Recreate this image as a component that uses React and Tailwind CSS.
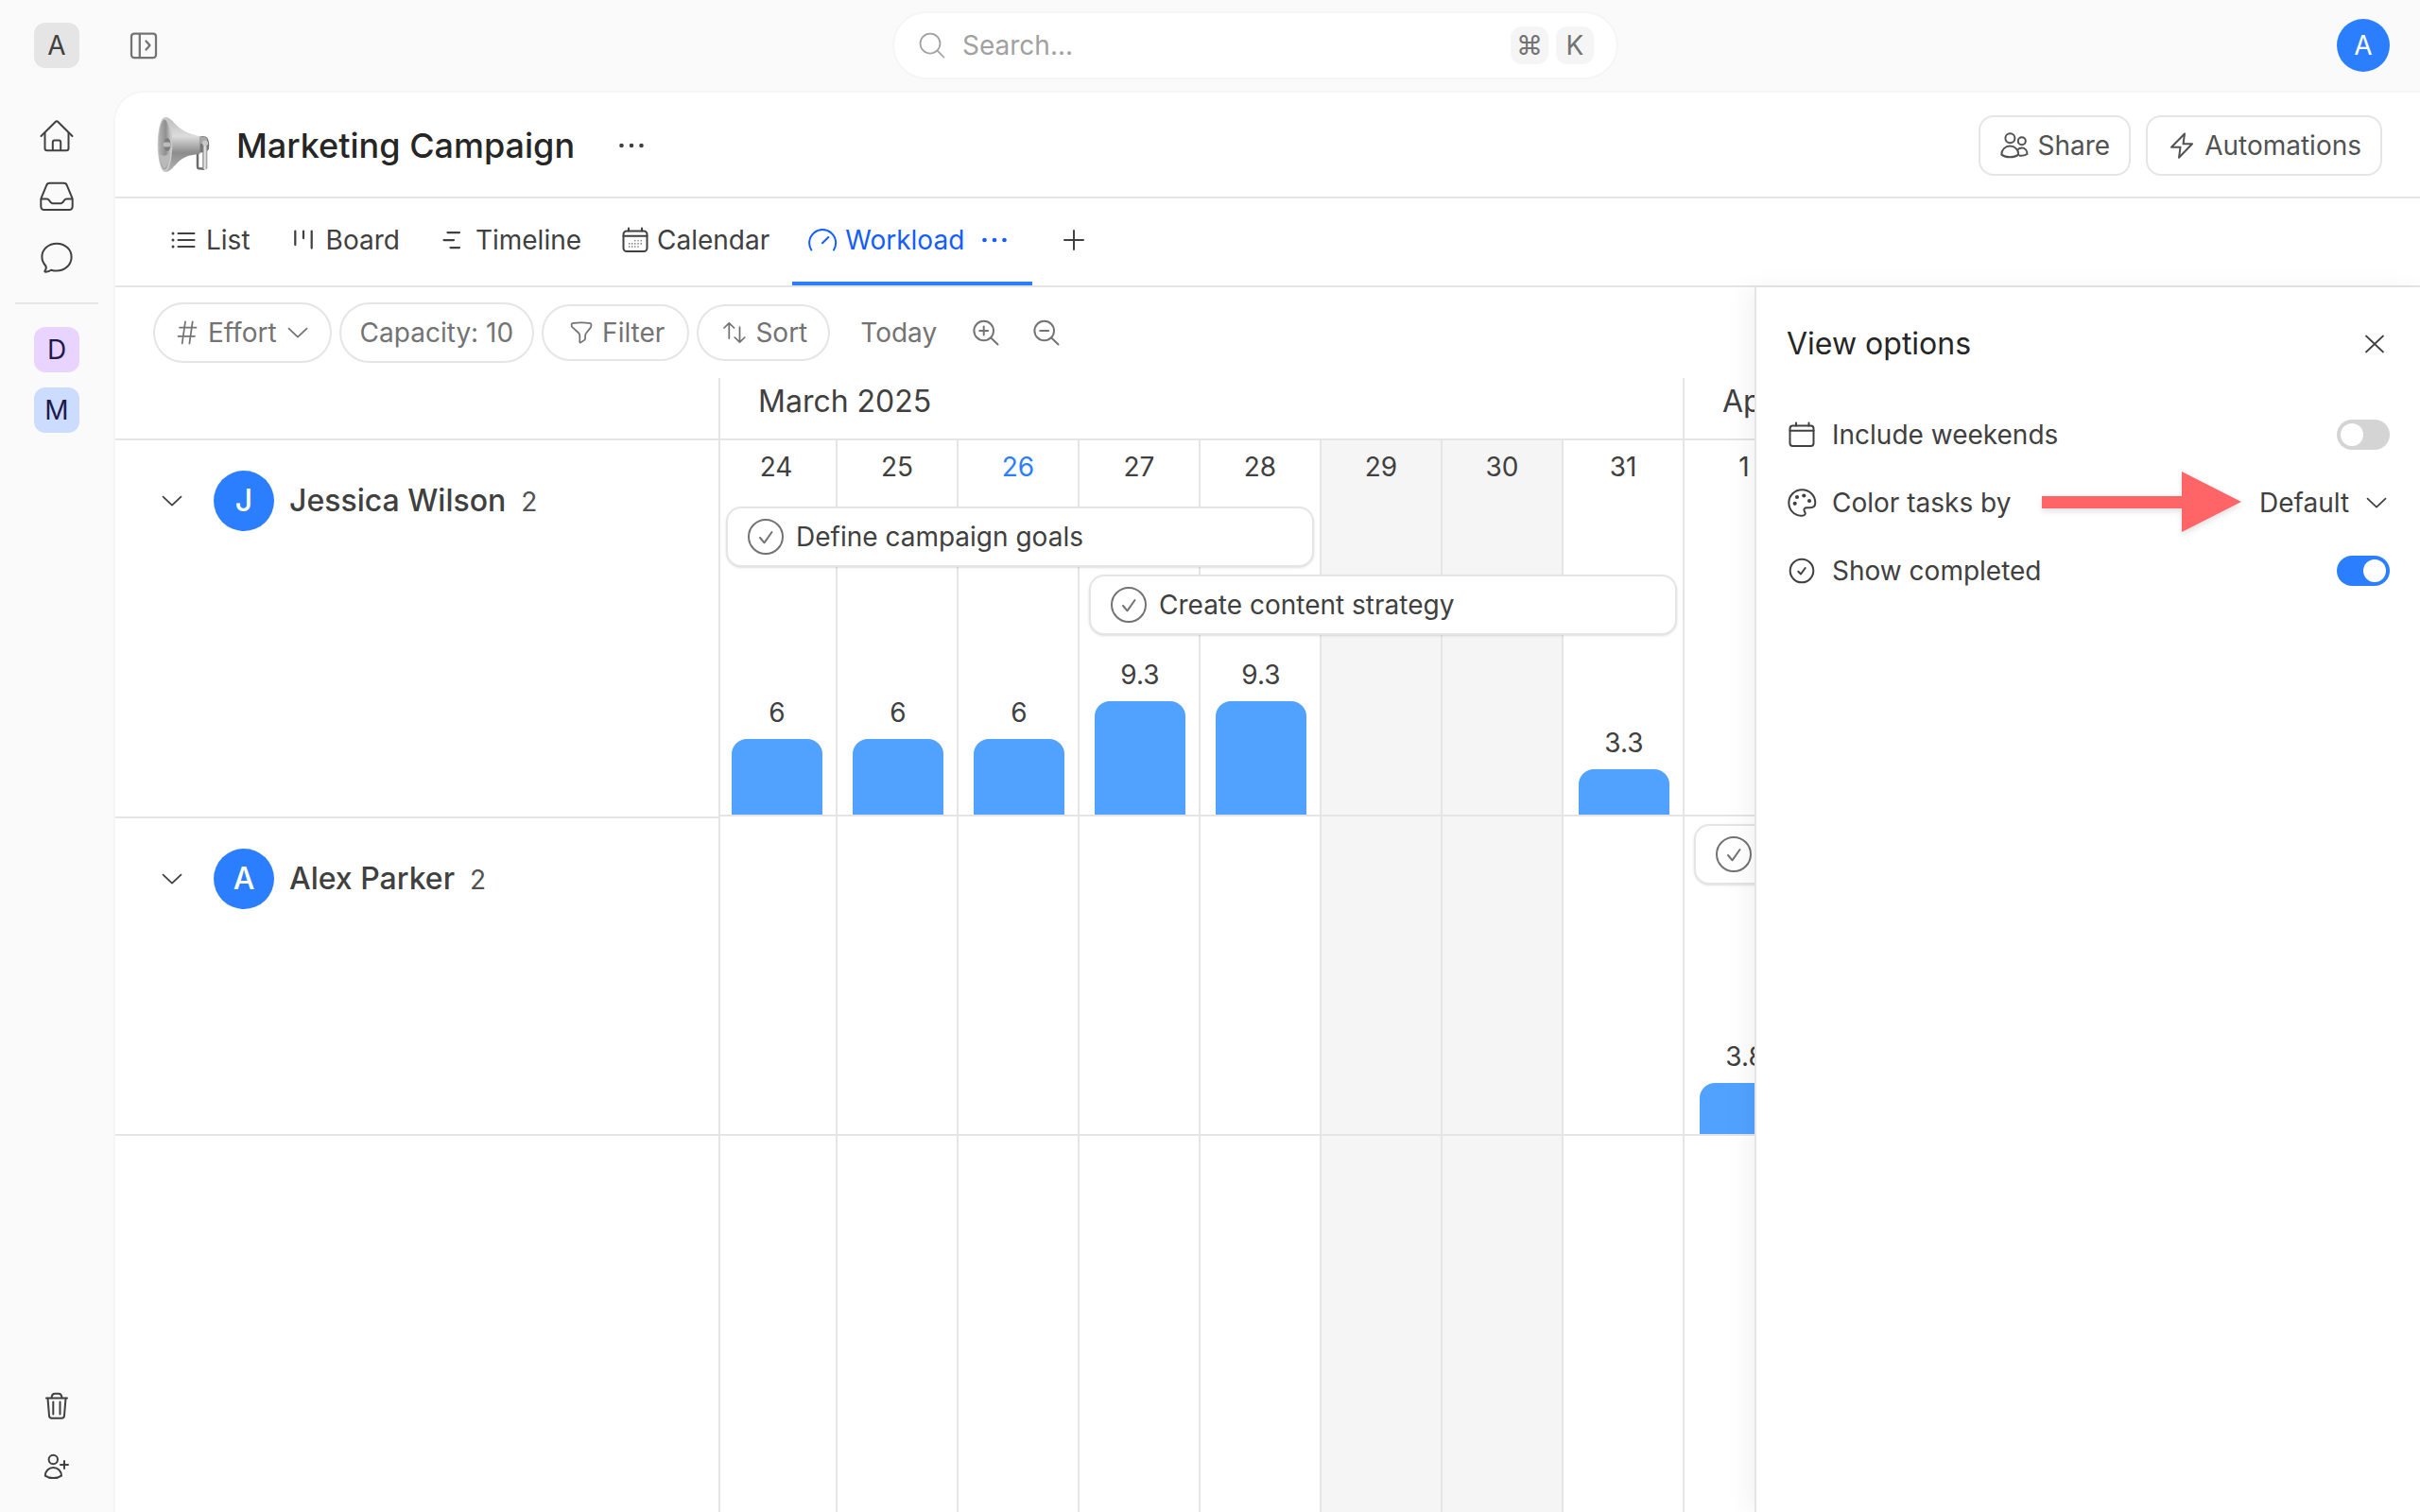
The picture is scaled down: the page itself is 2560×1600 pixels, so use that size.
import React, { useState } from 'react';

const Svg = ({ box = 32, stroke = 2, className = '', children }) => (
  <svg
    width={box}
    height={box}
    viewBox={`0 0 ${box} ${box}`}
    fill="none"
    stroke="currentColor"
    strokeWidth={stroke}
    strokeLinecap="round"
    strokeLinejoin="round"
    aria-hidden="true"
    className={`shrink-0 ${className}`}
  >
    {children}
  </svg>
);

const HomeIcon = () => (
  <Svg box={40}>
    <path d="M3.5 20 18.6 5q1.4-1.4 2.8 0L36.5 20" />
    <path d="M7.5 16.5V33q0 2.3 2.3 2.3h20.4q2.3 0 2.3-2.3V16.5" />
    <path d="M15.8 35V26.500q0-2 2-2h4.400q2 0 2 2V35" />
  </Svg>
);

const InboxIcon = () => (
  <Svg box={40}>
    <path d="M12.500 5.800h15q2.600 0 3.400 2.600l5.300 12.800q.5 1.200.5 2.600v6.400q0 3.800-3.600 3.800H6.900q-3.600 0-3.600-3.800v-6.400q0-1.400.5-2.600L9.100 8.400q.8-2.600 3.400-2.600z" />
    <path d="M3.600 22.500h5.600q2 0 3 1.800t3.300 3h9q2.300-1.200 3.300-3t3-1.800h5.600" />
  </Svg>
);

const ChatIcon = () => (
  <Svg box={40}>
    <path d="M20 5.800c-8.700 0-15.600 6-15.600 14 0 3.600 1.500 6.900 3.900 9.400.9 1.800.4 3.800-.8 5.300-.5.7 0 1.400.9 1.300 2.400-.2 4.300-1 5.700-2.100 1.800.6 3.800.9 5.900.9 8.700 0 15.600-6.500 15.600-14.600S28.700 5.800 20 5.800z" />
  </Svg>
);

const TrashIcon = () => (
  <Svg box={40}>
    <path d="M9 11.500h22" />
    <path d="M14.500 11.300q.4-4.500 3.600-4.500h3.800q3.200 0 3.600 4.500" />
    <path d="M10.500 11.700 12 30.200q.2 2.500 2.600 2.500h10.800q2.400 0 2.600-2.500l1.500-18.500" />
    <path d="M16.300 15.500v13M23.500 15.500v13" />
  </Svg>
);

const InviteIcon = () => (
  <Svg box={40}>
    <circle cx="16.300" cy="12.500" r="4.700" />
    <path d="M7.800 29.600c0-5 3.800-8.600 8.600-8.600s8.600 3.600 8.600 8.600c-2.500 1.800-5.400 2.500-8.600 2.500s-6.100-.7-8.600-2.500z" />
    <path d="M24 18h8M28 14v8" />
  </Svg>
);

const PanelIcon = () => (
  <Svg stroke={2.25}>
    <rect x="3" y="3.500" width="26" height="25.500" rx="3" />
    <path d="M11.800 4v25M18.500 11.500 22.500 16l-4 4.500" />
  </Svg>
);

const SearchIcon = () => (
  <Svg stroke={1.75}>
    <circle cx="14" cy="14" r="10.500" />
    <path d="m21.800 21.800 6.700 6.700" />
  </Svg>
);

const ShareIcon = () => (
  <Svg>
    <circle cx="11.400" cy="8.200" r="5" />
    <circle cx="23.800" cy="11.300" r="4" />
    <path d="M2.300 25.600c0-5.200 3.900-9 9-9s9 3.800 9 9c-2.600 2-5.700 2.700-9 2.700s-6.400-.7-9-2.700z" />
    <path d="M19.300 20.600c1.200-1.400 2.700-2.100 4.500-2.100 3.300 0 5.700 2.700 5.700 6.500-2.400 1.400-5.200 2-8 1.700" />
  </Svg>
);

const BoltIcon = () => (
  <Svg>
    <path d="M19 3.500 5 17.800h9.500L13 28.800 27 14.300h-9.500z" />
  </Svg>
);

const DotsIcon = () => (
  <Svg>
    <g fill="currentColor" stroke="none">
      <circle cx="5.500" cy="16" r="2.300" />
      <circle cx="16" cy="16" r="2.300" />
      <circle cx="26.500" cy="16" r="2.300" />
    </g>
  </Svg>
);

const ListIcon = () => (
  <Svg>
    <path d="M10.500 9h17M10.500 16h17M10.500 23h17" />
    <g fill="currentColor" stroke="none">
      <circle cx="5" cy="9" r="1.500" />
      <circle cx="5" cy="16" r="1.500" />
      <circle cx="5" cy="23" r="1.500" />
    </g>
  </Svg>
);

const BoardIcon = () => (
  <Svg stroke={2.25}>
    <path d="M7.300 6.500V21M16 6.500V14M24.700 6.500v18" />
  </Svg>
);

const TimelineIcon = () => (
  <Svg stroke={2.25}>
    <path d="M10.500 8H23M6.500 16H17M13.500 24H23" />
  </Svg>
);

const CalendarIcon = () => (
  <Svg>
    <rect x="4.500" y="6.500" width="25" height="21.500" rx="3.500" />
    <path d="M4.500 11.800h25M10 3.500v3M24 3.500v3" />
    <path
      strokeWidth="1.600"
      strokeOpacity=".75"
      d="M16.800 16.700h.01M20 16.700h.01M23.200 16.700h.01M10.700 19.900h.01M13.700 19.900h.01M16.800 19.900h.01M20 19.900h.01M23.200 19.900h.01M10.700 23.100h.01M13.700 23.100h.01M16.800 23.100h.01M20 23.100h.01"
    />
  </Svg>
);

const GaugeIcon = () => (
  <Svg>
    <path d="M4.300 26.500A14 14 0 1 1 28 26.500" />
    <path d="m16 19.300 6.300-6.300" />
  </Svg>
);

const PlusIcon = () => (
  <Svg>
    <path d="M16 6v20M6 16h20" />
  </Svg>
);

const HashIcon = () => (
  <Svg stroke={1.75}>
    <path d="M8 10.700h17.500M6.500 19.800H24M14 4.300l-3.300 23.200M21.700 4.300l-3.300 23.200" />
  </Svg>
);

const ChevronIcon = () => (
  <Svg stroke={1.75}>
    <path d="m6.500 11.700 9.500 9 9.500-9" />
  </Svg>
);

const FilterIcon = () => (
  <Svg stroke={1.75}>
    <path d="M5.600 7.200q0-.9 1-1.100 9.400-1.400 18.800 0 1 .2 1 1.100v1.200q0 1.600-1 2.700l-4.300 5.400q-1 1.200-1 2.800v2.600q0 1.300-1 2l-3.600 2.500q-1.200.8-1.200-.6v-6.500q0-1.600-1-2.800l-6.700-6.100q-1-1-1-2.500z" />
  </Svg>
);

const SortIcon = () => (
  <Svg stroke={1.75}>
    <path d="M10.300 6v16M5 11l5.300-5.200 5.300 5.200M21.500 10v16M16.200 21l5.300 5.200 5.300-5.200" />
  </Svg>
);

const ZoomIcon = ({ plus }) => (
  <Svg>
    <circle cx="13.700" cy="14" r="10.300" />
    <path d="m21.500 21.800 7 6.700M9.200 14h9" />
    {plus && <path d="M13.700 9.500v9" />}
  </Svg>
);

const CloseIcon = () => (
  <Svg stroke={1.75}>
    <path d="M7 7.500 25 24.500M25 7.500 7 24.500" />
  </Svg>
);

const WeekendIcon = () => (
  <Svg>
    <rect x="3.500" y="6.500" width="25" height="21.500" rx="3" />
    <path d="M3.500 11.800h25M10 3.500v3M23.500 3.500v3" />
  </Svg>
);

const PaletteIcon = () => (
  <Svg>
    <path d="M15 29.800C7.500 29.300 2.300 23.300 2.300 16a14 13.800 0 0 1 28 0c0 3.700-2.600 5.200-5.600 5.200h-3.400c-2.400 0-3.500 1.600-2.600 3.400l.9 1.900c.8 1.900-1.200 3.500-4.600 3.300z" />
    <g fill="currentColor" stroke="none">
      <circle cx="11" cy="10" r="2.100" />
      <circle cx="18.300" cy="8.500" r="2.100" />
      <circle cx="24" cy="14" r="2.100" />
      <circle cx="8.700" cy="16.800" r="2.100" />
    </g>
  </Svg>
);

const CompletedIcon = () => (
  <Svg>
    <circle cx="16" cy="16" r="12.300" />
    <path d="m12.300 16.800 2.700 2.700 4.700-6.500" />
  </Svg>
);

const TaskCheckIcon = () => (
  <Svg box={40}>
    <circle cx="20" cy="20" r="18" />
    <path d="m14 21 4.500 5.300L26.500 15" />
  </Svg>
);

const Megaphone = () => (
  <svg width="64" height="64" viewBox="0 0 64 64" aria-hidden="true" className="shrink-0">
    <defs>
      <linearGradient id="horn" x1="0" y1="0" x2="0" y2="1">
        <stop offset="0" stopColor="#bdbdbd" />
        <stop offset=".35" stopColor="#dcdcdc" />
        <stop offset=".65" stopColor="#8c8c8c" />
        <stop offset="1" stopColor="#b4b4b4" />
      </linearGradient>
      <linearGradient id="mouth" x1="0" y1="0" x2="1" y2="0">
        <stop offset="0" stopColor="#b5b5b5" />
        <stop offset=".6" stopColor="#8f8f8f" />
        <stop offset="1" stopColor="#c4c4c4" />
      </linearGradient>
      <linearGradient id="handle" x1="0" y1="0" x2="1" y2="0">
        <stop offset="0" stopColor="#7b7b7b" />
        <stop offset=".5" stopColor="#f1f1f1" />
        <stop offset="1" stopColor="#858585" />
      </linearGradient>
    </defs>
    <path d="M47 40v14.500q0 1.500 1.500 1.700l6 .6" fill="none" stroke="#6a6a6a" strokeWidth="2.500" />
    <path d="M49 22.500q6-1.500 8.500 1.500 2.500 5 1.500 11.500-2 4.500-10 4z" fill="#777" />
    <path d="M50 23q5-1 7 1.500l-.5 5-6.500.5z" fill="#a9a9a9" />
    <rect x="52.300" y="32" width="5" height="25.500" rx="2" fill="url(#handle)" />
    <circle cx="55" cy="29.500" r="3" fill="#c9c9c9" />
    <path d="M13 2c5 0 9 6 14 10.500 7 6 14 7.500 22.500 9.700V41c-8.500.8-15 1.500-22 7.500C22 53.500 18 60 13 60z" fill="url(#horn)" />
    <ellipse cx="12.500" cy="31" rx="7.800" ry="29" fill="#c9c9c9" />
    <ellipse cx="12" cy="31" rx="6.300" ry="26.500" fill="url(#mouth)" />
    <path d="M6.500 41q5 4 11.500-1-1 12-6 17-4-4-5.500-16z" fill="#b9b9b9" />
    <ellipse cx="15" cy="31" rx="3.500" ry="7" fill="#7d7d7d" />
    <rect x="10.500" y="28.500" width="8" height="5" rx="2.500" fill="#bcbcbc" />
  </svg>
);

const tabs = [
  { name: 'List', Icon: ListIcon },
  { name: 'Board', Icon: BoardIcon },
  { name: 'Timeline', Icon: TimelineIcon },
  { name: 'Calendar', Icon: CalendarIcon },
];

const days = [
  { label: '24' },
  { label: '25' },
  { label: '26', today: true },
  { label: '27' },
  { label: '28' },
  { label: '29', weekend: true },
  { label: '30', weekend: true },
  { label: '31' },
  { label: '1' },
];

const jessica = {
  tasks: [
    { title: 'Define campaign goals', column: '1 / span 5' },
    { title: 'Create content strategy', column: '4 / span 5' },
  ],
  // label and bar height for each day column
  bars: [
    ['6', 80],
    ['6', 80],
    ['6', 80],
    ['9.3', 120],
    ['9.3', 120],
    null,
    null,
    ['3.3', 48],
    null,
  ],
};

const alex = {
  tasks: [{ column: '9 / span 1' }],
  bars: [null, null, null, null, null, null, null, null, ['3.8', 54]],
};

const Sidebar = () => (
  <aside className="flex w-[120px] shrink-0 flex-col items-center pt-6 pb-4">
    <button className="flex size-12 items-center justify-center rounded-xl bg-neutral-200">A</button>
    <nav className="mt-10 flex w-full flex-col items-center">
      <a href="#home" aria-label="Home" className="flex h-16 items-center"><HomeIcon /></a>
      <a href="#inbox" aria-label="Inbox" className="flex h-16 items-center"><InboxIcon /></a>
      <a href="#chat" aria-label="Chat" className="flex h-16 items-center"><ChatIcon /></a>
      <hr className="my-4 w-[88px] border-t-2 border-neutral-200" />
      <a href="#d" className="my-2 flex size-12 items-center justify-center rounded-xl bg-purple-200 text-[#1e1a4d]">D</a>
      <a href="#m" className="my-2 flex size-12 items-center justify-center rounded-xl bg-[#cbdcff] text-[#1e1a4d]">M</a>
    </nav>
    <div className="mt-auto flex flex-col items-center">
      <button aria-label="Trash" className="flex h-16 items-center"><TrashIcon /></button>
      <button aria-label="Invite" className="flex h-16 items-center"><InviteIcon /></button>
    </div>
  </aside>
);

const TopBar = () => (
  <header className="flex h-24 shrink-0 items-center pr-8 pl-2">
    <div className="flex flex-1">
      <button aria-label="Expand sidebar" className="p-2 text-neutral-500"><PanelIcon /></button>
    </div>
    <label className="flex h-[72px] w-[32%] min-w-[400px] items-center gap-4 rounded-full border-2 border-neutral-100 bg-white px-6 text-neutral-400">
      <SearchIcon />
      <input
        type="search"
        aria-label="Search"
        placeholder="Search..."
        className="min-w-0 flex-1 bg-transparent outline-none placeholder:text-neutral-400"
      />
      <span className="flex gap-2 text-neutral-500">
        <kbd className="flex size-10 items-center justify-center rounded-xl bg-neutral-100 font-[inherit]">⌘</kbd>
        <kbd className="flex size-10 items-center justify-center rounded-xl bg-neutral-100 font-[inherit]">K</kbd>
      </span>
    </label>
    <div className="flex flex-1 justify-end">
      <button className="flex size-14 items-center justify-center rounded-full bg-blue-500 text-white">A</button>
    </div>
  </header>
);

const ProjectHeader = () => (
  <div className="flex h-28 shrink-0 items-center border-b-2 border-neutral-200 px-10 pt-0.5">
    <Megaphone />
    <h1 className="ml-6 text-[36px] font-medium text-neutral-800">Marketing Campaign</h1>
    <button aria-label="Project menu" className="ml-7 px-4"><DotsIcon /></button>
    <div className="ml-auto flex gap-4 text-neutral-600">
      <button className="flex h-16 items-center gap-2 rounded-2xl border-2 border-neutral-200 px-5">
        <ShareIcon />
        Share
      </button>
      <button className="flex h-16 items-center gap-2 rounded-2xl border-2 border-neutral-200 px-5">
        <BoltIcon />
        Automations
      </button>
    </div>
  </div>
);

const ViewTabs = () => (
  <nav className="flex h-[94px] shrink-0 items-stretch gap-2 border-b-2 border-neutral-200 px-10">
    {tabs.map(({ name, Icon }) => (
      <a key={name} href="#view" className="flex items-center gap-2 border-b-4 border-transparent px-4">
        <Icon />
        {name}
      </a>
    ))}
    <div className="flex items-center gap-4 border-b-4 border-blue-500 pr-6 pl-4 text-blue-600">
      <a href="#workload" aria-current="page" className="flex items-center gap-2">
        <GaugeIcon />
        Workload
      </a>
      <button aria-label="Workload view menu"><DotsIcon /></button>
    </div>
    <button aria-label="Add view" className="border-b-4 border-transparent px-5"><PlusIcon /></button>
  </nav>
);

const Toolbar = () => (
  <div className="flex h-24 shrink-0 items-center gap-2 px-10 text-neutral-500">
    <button className="flex h-16 items-center gap-1.5 rounded-full border-2 border-neutral-200 px-[18px]">
      <HashIcon />
      Effort
      <ChevronIcon />
    </button>
    <button className="h-16 rounded-full border-2 border-neutral-200 px-5">Capacity: 10</button>
    <button className="flex h-[60px] items-center gap-1.5 rounded-full border-2 border-neutral-200 px-6">
      <FilterIcon />
      Filter
    </button>
    <button className="flex h-[60px] items-center gap-1.5 rounded-full border-2 border-neutral-200 px-[22px]">
      <SortIcon />
      Sort
    </button>
    <div className="flex items-center">
      <button className="pr-5 pl-6">Today</button>
      <button aria-label="Zoom in" className="p-4"><ZoomIcon plus /></button>
      <button aria-label="Zoom out" className="p-4"><ZoomIcon /></button>
    </div>
  </div>
);

const Person = ({ name, count, className }) => (
  <div className={`flex items-start gap-3 border-b-2 border-neutral-200 pt-8 pl-7 ${className}`}>
    <button aria-label={`Collapse ${name}`} className="p-4"><ChevronIcon /></button>
    <div className="flex items-center gap-4">
      <span className="flex size-16 items-center justify-center rounded-full bg-blue-500 text-[32px] font-medium text-white">
        {name[0]}
      </span>
      <p className="flex items-baseline gap-4">
        <span className="text-[32px] font-medium">{name}</span>
        <span className="text-neutral-600">{count}</span>
      </p>
    </div>
  </div>
);

const Tasks = ({ tasks, className }) => (
  <div className={`grid grid-cols-[repeat(9,128px)] gap-y-2 ${className}`}>
    {tasks.map((task) => (
      <div
        key={task.column}
        style={{ gridColumn: task.column }}
        className="mr-2 ml-[10px] flex h-16 items-center gap-3 rounded-2xl border-2 border-neutral-200 bg-white px-5 whitespace-nowrap shadow-sm"
      >
        <span className="text-neutral-500"><TaskCheckIcon /></span>
        {task.title}
      </div>
    ))}
  </div>
);

const Bars = ({ bars }) => (
  <div className="mt-auto flex items-end">
    {bars.map((bar, i) => (
      <div key={i} className="w-32 shrink-0 px-4 text-center">
        {bar && (
          <>
            <div className="mb-2 leading-10">{bar[0]}</div>
            <div className="rounded-t-2xl bg-blue-400" style={{ height: bar[1] }} />
          </>
        )}
      </div>
    ))}
  </div>
);

const Schedule = () => (
  <div className="min-w-0 flex-1 overflow-hidden">
    <div className="-ml-1 flex h-full w-[1152px] flex-col">
      <div className="flex h-[66px] shrink-0 border-b-2 border-neutral-200 text-[32px] leading-[50px] whitespace-nowrap">
        <div className="w-[1024px] shrink-0 border-r-2 border-neutral-200 pl-11">March 2025</div>
        <div className="pl-10">April 2025</div>
      </div>
      <div className="grid flex-1 grid-cols-1">
        {/* Day columns */}
        <div className="col-start-1 row-start-1 flex">
          {days.map((day) => (
            <div
              key={day.label}
              className={`w-32 shrink-0 border-r-2 border-neutral-200 ${day.weekend ? 'bg-neutral-100' : ''}`}
            />
          ))}
        </div>
        {/* People rows */}
        <div className="col-start-1 row-start-1">
          <div className="flex h-[398px] flex-col border-b-2 border-neutral-200">
            <div className="flex h-14 items-center">
              {days.map((day) => (
                <div
                  key={day.label}
                  className={`w-32 shrink-0 pr-0.5 text-center ${day.today ? 'text-blue-500' : ''}`}
                >
                  {day.label}
                </div>
              ))}
            </div>
            <Tasks tasks={jessica.tasks} className="mt-[14px]" />
            <Bars bars={jessica.bars} />
          </div>
          <div className="flex h-[338px] flex-col border-b-2 border-neutral-200">
            <Tasks tasks={alex.tasks} className="mt-2" />
            <Bars bars={alex.bars} />
          </div>
        </div>
      </div>
    </div>
  </div>
);

const Toggle = ({ id, checked, onChange }) => (
  <input
    id={id}
    type="checkbox"
    role="switch"
    checked={checked}
    onChange={(e) => onChange(e.target.checked)}
    className="h-8 w-14 appearance-none rounded-full bg-neutral-300 p-1 before:block before:size-6 before:rounded-full before:bg-white checked:bg-blue-500 checked:before:ml-6"
  />
);

const Arrow = () => (
  <svg
    width="220"
    height="72"
    viewBox="0 0 220 72"
    aria-hidden="true"
    className="pointer-events-none absolute top-0 right-[153px] drop-shadow-md"
  >
    <path d="M5 29h148V3l63 32-63 32V42H5z" fill="#ff6467" />
  </svg>
);

const ViewOptions = () => {
  const [weekends, setWeekends] = useState(false);
  const [completed, setCompleted] = useState(true);

  return (
    <aside className="relative z-10 w-[704px] shrink-0 border-l-2 border-neutral-200 bg-white px-8 shadow-[-8px_0_24px_rgba(0,0,0,0.05)]">
      <div className="flex h-[120px] items-center justify-between">
        <h2 className="text-[32px] text-neutral-800">View options</h2>
        <button aria-label="Close"><CloseIcon /></button>
      </div>
      <div className="flex h-[72px] items-center gap-4">
        <WeekendIcon />
        <label htmlFor="weekends" className="flex-1">Include weekends</label>
        <Toggle id="weekends" checked={weekends} onChange={setWeekends} />
      </div>
      <div className="relative flex h-[72px] items-center gap-4">
        <PaletteIcon />
        <label htmlFor="color" className="flex-1">Color tasks by</label>
        <Arrow />
        <div className="-mr-0.5 grid items-center">
          <select id="color" className="col-start-1 row-start-1 appearance-none bg-transparent pr-11">
            <option>Default</option>
          </select>
          <span className="pointer-events-none col-start-1 row-start-1 justify-self-end"><ChevronIcon /></span>
        </div>
      </div>
      <div className="flex h-[72px] items-center gap-4">
        <CompletedIcon />
        <label htmlFor="completed" className="flex-1">Show completed</label>
        <Toggle id="completed" checked={completed} onChange={setCompleted} />
      </div>
    </aside>
  );
};

const App = () => (
  <div className="flex h-screen overflow-hidden bg-neutral-50 font-['Inter',sans-serif] text-[28px] leading-10 text-neutral-700">
    <Sidebar />
    <div className="flex min-w-0 flex-1 flex-col">
      <TopBar />
      <main className="flex min-h-0 flex-1 flex-col overflow-hidden rounded-tl-[32px] border-t-2 border-l-2 border-neutral-100 bg-white">
        <ProjectHeader />
        <ViewTabs />
        <div className="flex min-h-0 flex-1">
          <section className="flex min-w-0 flex-1 flex-col">
            <Toolbar />
            <div className="flex min-h-0 flex-1">
              <div className="w-[640px] shrink-0 border-r-2 border-neutral-200">
                <div className="h-[66px] border-b-2 border-neutral-200" />
                <Person name="Jessica Wilson" count={2} className="h-[400px]" />
                <Person name="Alex Parker" count={2} className="h-[336px]" />
              </div>
              <Schedule />
            </div>
          </section>
          <ViewOptions />
        </div>
      </main>
    </div>
  </div>
);

export default App;
